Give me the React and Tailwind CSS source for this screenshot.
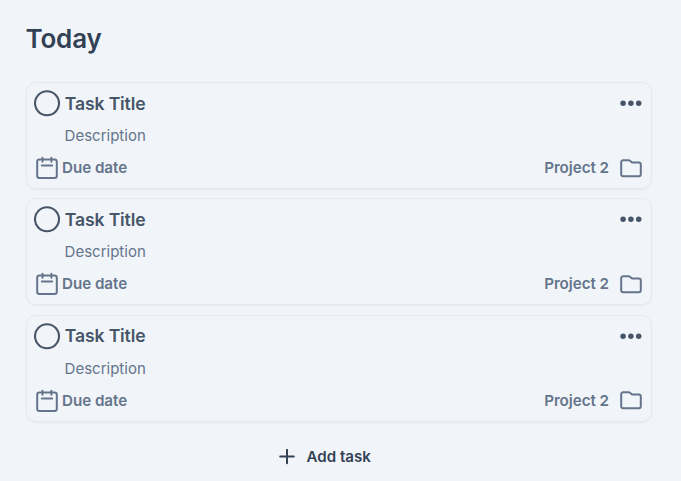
function CircleIcon() {
  return (
    <svg className="size-[27px] shrink-0" viewBox="0 0 27 27" fill="none" stroke="currentColor" strokeWidth="2.1">
      <circle cx="13" cy="13.2" r="12" />
    </svg>
  );
}

function DotsIcon() {
  return (
    <svg className="h-[7px] w-[22px]" viewBox="0 0 22 7" fill="currentColor">
      <circle cx="3.1" cy="3.3" r="2.75" />
      <circle cx="10.9" cy="3.3" r="2.75" />
      <circle cx="18.7" cy="3.3" r="2.75" />
    </svg>
  );
}

function CalendarIcon() {
  return (
    <svg className="h-[24px] w-[22px] shrink-0" viewBox="0 0 22 24" fill="none" stroke="currentColor" strokeWidth="2" strokeLinecap="round" strokeLinejoin="round">
      <rect x="1.2" y="3.6" width="19.6" height="18.4" rx="2.2" />
      <path d="M6.5 1.8v4M15.4 1.8v4M5.8 9.5h10.4" />
    </svg>
  );
}

function FolderIcon() {
  return (
    <svg className="h-[19px] w-[22px] shrink-0" viewBox="0 0 22 19" fill="none" stroke="currentColor" strokeWidth="2" strokeLinejoin="round">
      <path d="M1.2 3.2A2 2 0 0 1 3.2 1.2h5.3c.6 0 1.1.2 1.5.6l1.1 1c.4.4.9.6 1.5.6h6.2a2 2 0 0 1 2 2v9.8a2 2 0 0 1-2 2H3.2a2 2 0 0 1-2-2z" />
    </svg>
  );
}

function TaskCard() {
  return (
    <article className="flex h-[107px] flex-col rounded-[10px] border border-[#e6eaef] pt-[4px] pr-[9px] pl-[7px] shadow-[0_1px_2px_rgba(15,23,42,0.05)]">
      <div className="flex h-[33px] items-center text-[#475569]">
        <CircleIcon />
        <h2 className="ml-[3.8px] flex-1 pt-px text-[17.6px] font-semibold tracking-[-0.008em]">Task Title</h2>
        <DotsIcon />
      </div>
      <p className="h-8 pl-[30.6px] text-[15px] leading-8 text-[#64748b]">Description</p>
      <div className="flex h-8 items-center pl-[2px] text-[15.2px] font-semibold tracking-[-0.003em] text-[#64748b]">
        <CalendarIcon />
        <span className="ml-1 flex-1 pt-px">Due date</span>
        <span className="mr-[11px] pt-px">Project 2</span>
        <FolderIcon />
      </div>
    </article>
  );
}

export default function App() {
  return (
    <main className="h-[481px] w-full overflow-hidden bg-[#f1f5f9] pr-[29px] pl-[26px] pt-[22px] font-['Inter',sans-serif]">
      <h1 className="-ml-[0.6px] h-[60px] text-[26px] leading-[33px] font-semibold tracking-[-0.005em] text-[#334155]">Today</h1>
      <div className="flex flex-col gap-[9.3px]">
        <TaskCard />
        <TaskCard />
        <TaskCard />
      </div>
      <button className="mt-[23px] ml-[252.5px] flex h-6 items-center text-[15.1px] font-semibold text-[#334155]">
        <svg className="size-4" viewBox="0 0 16 16" fill="none" stroke="currentColor" strokeWidth="2" strokeLinecap="round">
          <path d="M8 .9v13.4M1.2 7.6h13.6" />
        </svg>
        <span className="ml-3 pt-px">Add task</span>
      </button>
    </main>
  );
}
